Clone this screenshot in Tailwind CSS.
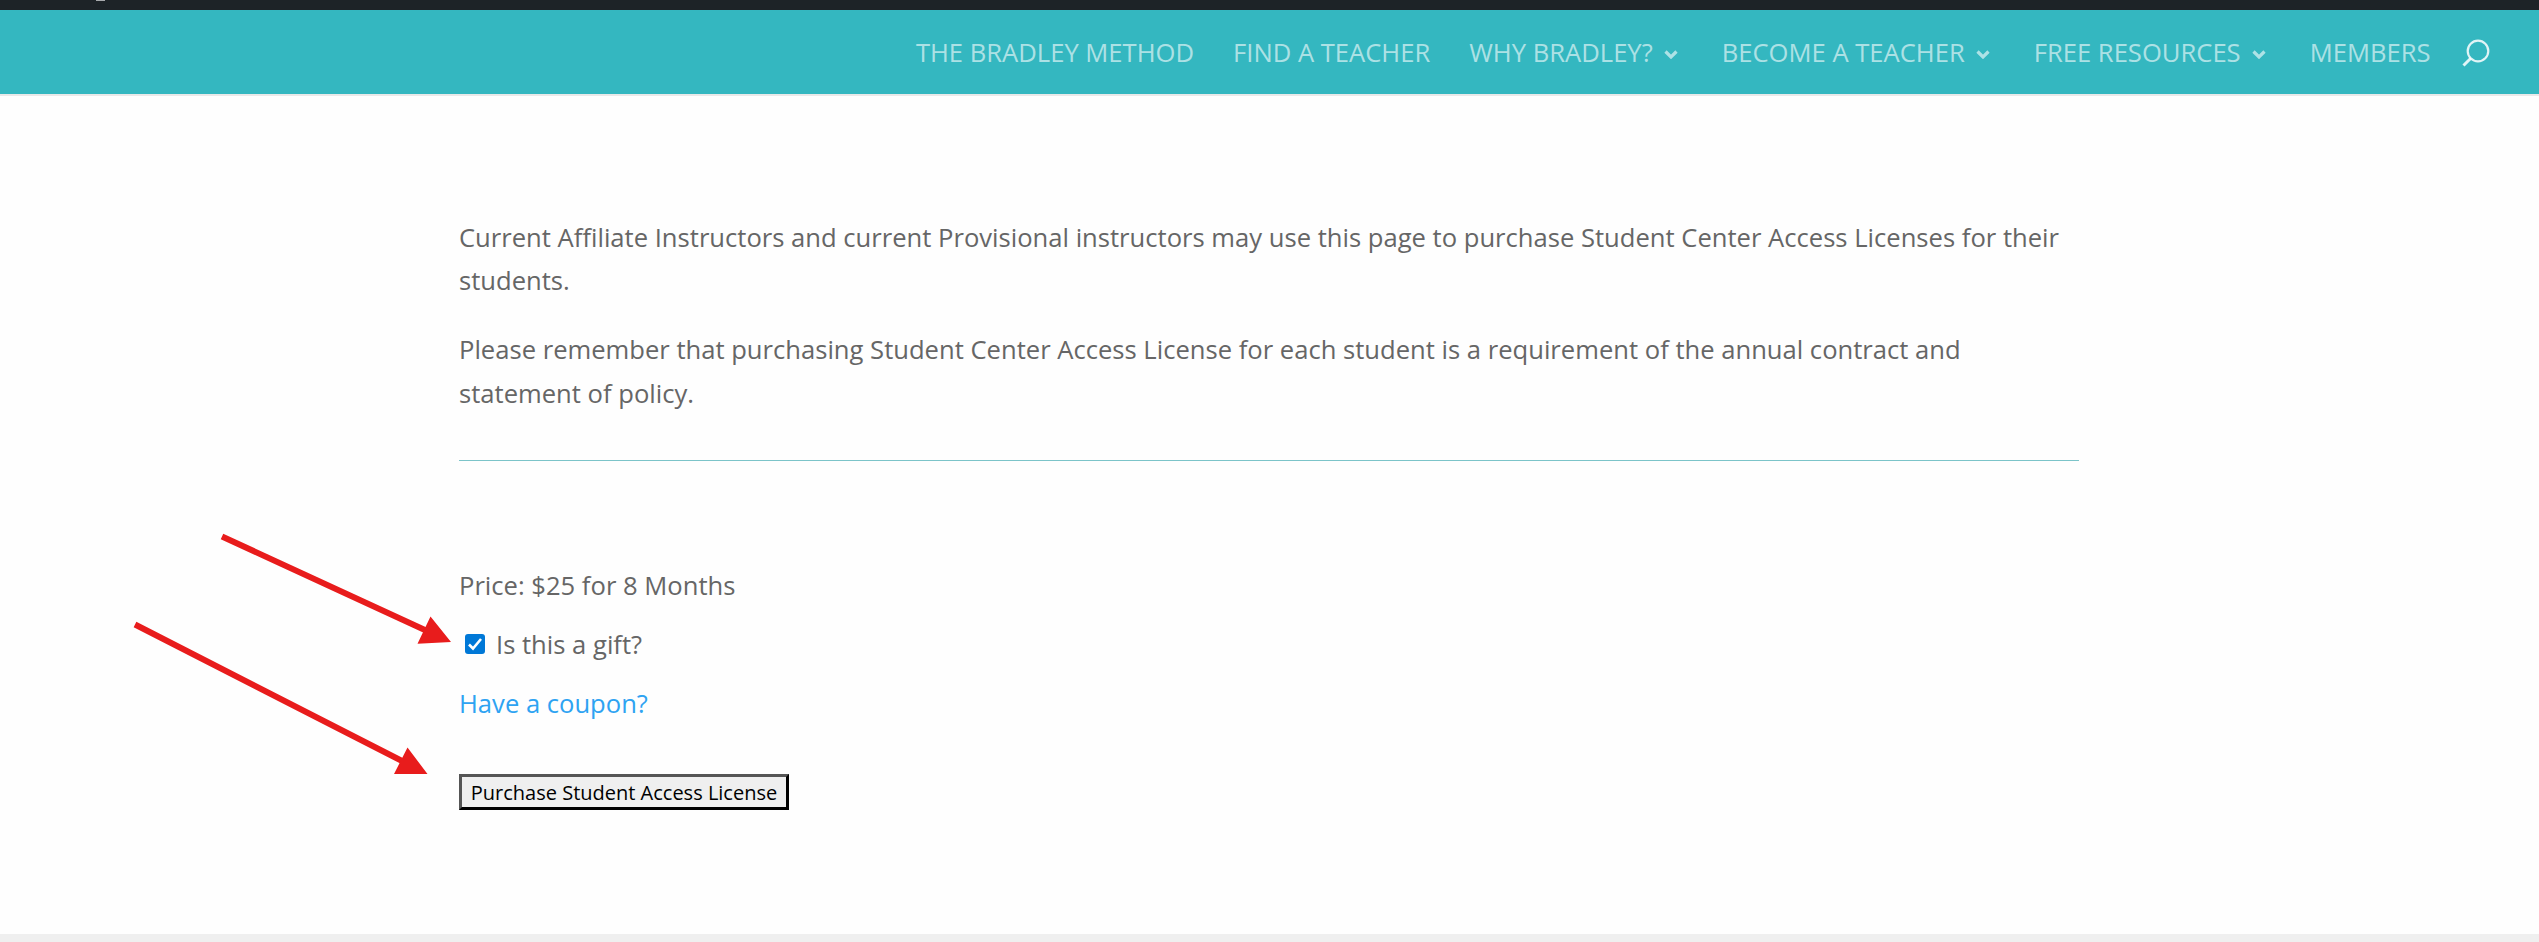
<!DOCTYPE html>
<html lang="en"><head><meta charset="utf-8"><title>Purchase Student Access License</title>
<script src="https://cdn.jsdelivr.net/npm/@tailwindcss/browser@4"></script></head>
<body class="relative h-[942px] overflow-hidden bg-[#fefefe] font-['Open_Sans',sans-serif] text-[25.6px] leading-[43.5px] text-[#666]">
<div class="flex h-[10px] items-start bg-[#1d2327] pl-[96px]"><span class="h-px w-[9px] bg-[#a7aaad]"></span></div>
<header class="flex h-[84px] items-center justify-end bg-[#34b7c0] pt-[2px] pr-[48px] text-white/60 shadow-[0_2px_0_#e9e9e9]">
<nav class="flex items-center gap-[39px] whitespace-nowrap">
<a>THE BRADLEY METHOD</a><a>FIND A TEACHER</a>
<a class="flex items-center gap-[11px] pr-[5px]">WHY BRADLEY?<svg class="mt-[2px] h-[9px] w-[14px]" viewBox="0 0 14 9" fill="none" stroke="currentColor" stroke-width="3.2"><path d="M1.5 1.5 7 7l5.5-5.5"/></svg></a>
<a class="flex items-center gap-[11px] pr-[5px]">BECOME A TEACHER<svg class="mt-[2px] h-[9px] w-[14px]" viewBox="0 0 14 9" fill="none" stroke="currentColor" stroke-width="3.2"><path d="M1.5 1.5 7 7l5.5-5.5"/></svg></a>
<a class="flex items-center gap-[11px] pr-[5px]">FREE RESOURCES<svg class="mt-[2px] h-[9px] w-[14px]" viewBox="0 0 14 9" fill="none" stroke="currentColor" stroke-width="3.2"><path d="M1.5 1.5 7 7l5.5-5.5"/></svg></a>
<a>MEMBERS</a></nav>
<svg class="ml-[31.5px] h-[28px] w-[29px] text-white/85" viewBox="0 0 29 28" fill="none" stroke="currentColor" stroke-width="2.2"><circle cx="16" cy="12" r="10.3"/><path d="M8.8 19.2 1.5 26.5" stroke-width="3"/></svg>
</header>
<main class="ml-[459px] w-[1620px] pt-[121.6px]">
<p>Current Affiliate Instructors and current Provisional instructors may use this page to purchase Student Center Access Licenses for their students.</p>
<p class="mt-[25.6px]">Please remember that purchasing Student Center Access License for each student is a requirement of the annual contract and statement of policy.</p>
<hr class="mt-[45px] border-t border-[#7cc4c9]">
<div class="mt-[102.8px] flex flex-col items-start gap-[15.5px]">
<div>Price: $25 for 8 Months</div>
<label class="flex items-center"><span class="mb-[1.4px] ml-[6px] flex h-[20px] w-[20px] items-center justify-center rounded-[3px] bg-[#0078d7]"><svg class="h-[14px] w-[14px]" viewBox="0 0 14 14" fill="none" stroke="white" stroke-width="2.6"><path d="M1 7.5 5 11.5 13 2"/></svg></span><span class="ml-[11px]">Is this a gift?</span></label>
<a class="text-[#2ea3f2]">Have a coupon?</a>
</div>
<button class="mt-[48.7px] flex h-[36px] w-[330px] items-center justify-center whitespace-nowrap border-[3px] border-t-[#555] border-r-black border-b-black border-l-[#555] bg-[#efefef] text-[20px] leading-[27px] text-black">Purchase Student Access License</button>
</main>
<footer class="absolute bottom-0 left-0 h-[8px] w-full bg-[#efefef]"></footer>
<svg class="absolute top-0 left-0 h-[942px] w-[500px]" viewBox="0 0 500 942" fill="#e81c1c" stroke="#e81c1c"><path d="M222 536.5 426 630.5M135 624.5 403 761.5" fill="none" stroke-width="6"/><path stroke="none" d="M451 642 430.5 616.5 417.5 643.7ZM427.5 774 407.5 747.5 394 774Z"/></svg>
</body></html>
